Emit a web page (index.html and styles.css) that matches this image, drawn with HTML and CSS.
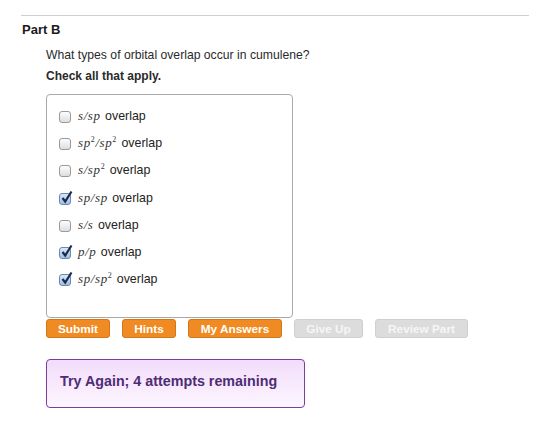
FILE: index.html
```html
<!DOCTYPE html>
<html>

<head>
    <meta charset="UTF-8">
    <title>Part B</title>
    <link rel="stylesheet" href="styles.css">
</head>

<body>

    <!-- =========== Part B =========== -->
    <div class="part">
        <h2 class="partTitle">Part B</h2>

        <div class="partBody">
            <p class="question">What types of orbital overlap occur in cumulene?</p>
            <p class="instructions">Check all that apply.</p>

            <!-- ============ Choices ================ -->
            <div class="choiceBox">
                <ul class="choices">
                    <li>
                        <span class="check"></span>
                        <span class="label"><span class="math">s/sp</span> overlap</span>
                    </li>
                    <li>
                        <span class="check"></span>
                        <span class="label"><span class="math">sp<sup>2</sup>/sp<sup>2</sup></span> overlap</span>
                    </li>
                    <li>
                        <span class="check"></span>
                        <span class="label"><span class="math">s/sp<sup>2</sup></span> overlap</span>
                    </li>
                    <li>
                        <span class="check checked"><svg viewBox="0 0 12 12" width="12" height="12"><path d="M2.5 6 L5.2 9.5 L11.5 -0.5" fill="none" stroke="#1b2a48" stroke-width="2.2" /></svg></span>
                        <span class="label"><span class="math">sp/sp</span> overlap</span>
                    </li>
                    <li>
                        <span class="check"></span>
                        <span class="label"><span class="math">s/s</span> overlap</span>
                    </li>
                    <li>
                        <span class="check checked"><svg viewBox="0 0 12 12" width="12" height="12"><path d="M2.5 6 L5.2 9.5 L11.5 -0.5" fill="none" stroke="#1b2a48" stroke-width="2.2" /></svg></span>
                        <span class="label"><span class="math">p/p</span> overlap</span>
                    </li>
                    <li>
                        <span class="check checked"><svg viewBox="0 0 12 12" width="12" height="12"><path d="M2.5 6 L5.2 9.5 L11.5 -0.5" fill="none" stroke="#1b2a48" stroke-width="2.2" /></svg></span>
                        <span class="label"><span class="math">sp/sp<sup>2</sup></span> overlap</span>
                    </li>
                </ul>
            </div>

            <!-- ============ Buttons ================ -->
            <div class="buttons">
                <button class="btn">Submit</button>
                <button class="btn">Hints</button>
                <button class="btn">My Answers</button>
                <button class="btn disabled">Give Up</button>
                <button class="btn disabled">Review Part</button>
            </div>

            <div class="feedback">Try Again; 4 attempts remaining</div>
        </div>
    </div>

</body>

</html>
```

FILE: styles.css
```css
* {
    font-family: "Liberation Sans", Arial, sans-serif;
    margin: 0;
    padding: 0;
    box-sizing: border-box;
}

body {
    background: #fff;
    color: #222;
}

.part {
    margin: 15px 19px 0 21px;
    border-top: 1px solid #cfcfcf;
}

.partTitle {
    font-size: 13px;
    font-weight: bold;
    color: #1a1a1a;
    margin-top: 6px;
    padding-left: 1px;
    line-height: 16px;
}

.partBody {
    padding-left: 25px;
}

.question {
    font-size: 12.2px;
    margin-top: 10px;
    line-height: 15px;
    color: #2a2a2a;
}

.instructions {
    font-size: 12px;
    font-weight: bold;
    margin-top: 6px;
    line-height: 15px;
    color: #2a2a2a;
}

.choiceBox {
    width: 247px;
    height: 224px;
    margin-top: 10px;
    border: 1px solid #a9a9a9;
    border-radius: 4px;
}

.choices {
    list-style: none;
    padding: 7px 0 0 12px;
}

.choices li {
    display: flex;
    align-items: center;
    height: 27.3px;
}

.check {
    flex: none;
    width: 12px;
    height: 12px;
    margin: 2px 7px 0 0;
    border: 1px solid #9a9a9a;
    border-radius: 3px;
    background: linear-gradient(#fdfdfd, #dedede);
}

.check.checked {
    border-color: #6f87a8;
    background: linear-gradient(#d8e8fa, #9cc0ea);
}

.check svg {
    display: block;
    margin: -2px 0 0 0;
    overflow: visible;
}

.label {
    font-size: 12.4px;
    color: #222;
}

.math {
    font-family: "Liberation Serif", "Times New Roman", serif;
    font-style: italic;
    font-size: 13px;
    letter-spacing: 0.6px;
    color: #333;
    margin-right: 1px;
}

.math sup {
    font-family: "Liberation Serif", serif;
    font-style: normal;
    font-size: 8px;
    line-height: 0;
}

.buttons {
    display: flex;
    gap: 12px;
    margin-top: 1px;
}

.btn {
    height: 19px;
    padding: 0;
    font-size: 11.8px;
    font-weight: bold;
    color: #fff;
    background: #ef8b22;
    border: 1px solid #d2781c;
    border-radius: 3px;
}

.btn:nth-child(1) {
    width: 64px;
}

.btn:nth-child(2) {
    width: 54px;
}

.btn:nth-child(3) {
    width: 94px;
}

.btn:nth-child(4) {
    width: 69px;
}

.btn:nth-child(5) {
    width: 93px;
}

.btn.disabled {
    background: #dcdcdc;
    border-color: #cfcfcf;
    color: #f6f6f6;
}

.feedback {
    width: 259px;
    height: 49px;
    margin-top: 21px;
    padding: 13px 0 0 13px;
    font-size: 14.3px;
    font-weight: bold;
    color: #4e2c74;
    border: 1px solid #7b3e9c;
    border-radius: 4px;
    background: linear-gradient(#f2dcfa, #fdf6ff);
}
```
